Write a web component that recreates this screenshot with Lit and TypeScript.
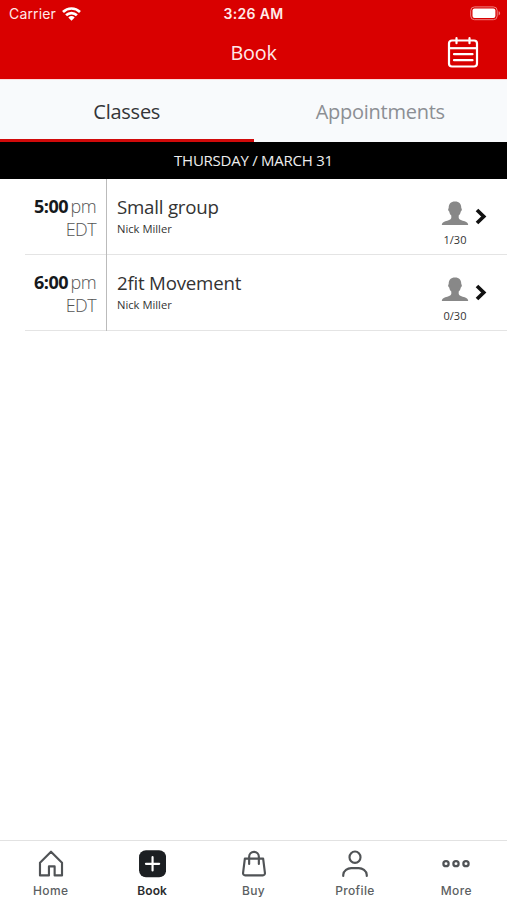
import { LitElement, html, css, svg } from "lit";
import { customElement, property } from "lit/decorators.js";

@customElement("class-row")
class ClassRow extends LitElement {
  @property() time = "";
  @property() name = "";
  @property() count = "";
  static styles = css`
    :host { display: flex; height: 76px; margin-left: 25px; box-sizing: border-box; border-bottom: 1px solid #e4e4e4; font-family: "Open Sans", "Noto Sans", sans-serif; color: #333; }
    .when { width: 71px; padding: 16px 10px 0 0; text-align: right; font-weight: 300; font-size: 18px; line-height: 23px; color: #555; border-right: 1px solid #bbb; white-space: nowrap; height: 60px; letter-spacing: -0.6px; }
    .when b { font-weight: 700; color: #16191c; letter-spacing: -0.5px; margin-right: 2.5px; }
    .info { flex: 1; padding: 15px 0 0 10px; }
    .name { font-size: 18.7px; line-height: 26px; letter-spacing: -0.22px; }
    .coach { font-size: 11.2px; line-height: 16px; margin-top: 0.5px; }
    .spots { width: 30px; margin-top: 22px; text-align: center; font-size: 11px; line-height: 14px; }
    .spots svg { display: block; margin: 0 auto 7px; }
    .arrow { margin: 29px 20px 0 5px; width: 12px; height: 17px; }
  `;
  render() {
    return html`
      <div class="when"><b>${this.time}</b>pm<br />EDT</div>
      <div class="info"><div class="name">${this.name}</div><div class="coach">Nick Miller</div></div>
      <div class="spots">
        <svg width="28" height="25" viewBox="0 0 28 25"><path fill="#888" d="M14 .5c4.300 0 6.400 2.500 6.300 6.700.9.300.7 2.300-.5 3.300-.4 2-1 3.100-2.100 4.100v2.300c.5 2 3.300 2.400 6 3.300 2.300.8 3.400 1.700 3.500 3.700H.8c.1-2 1.200-2.900 3.500-3.700 2.700-.9 5.500-1.300 6-3.300v-2.300c-1.100-1-1.700-2.100-2.100-4.100-1.200-1-1.400-3-.5-3.300C7.600 3 9.700.5 14 .5z"/></svg>
        ${this.count}
      </div>
      <svg class="arrow" viewBox="0 0 12 17"><path d="M2 2l6.700 6.500L2 15" fill="none" stroke="#111" stroke-width="3.700"/></svg>
    `;
  }
}

const icons = {
  home: svg`<path d="M3.200 27.200V13.600L15 1.800l11.800 11.800v13.600h-7.900v-9.600h-6.100v9.600z"/>`,
  book: svg`<rect x="1.100" y=".3" width="29" height="29" rx="7.500" fill="#1c1f22" stroke="none"/><path d="M15.600 7.700v14.200M8.500 14.800h14.200" stroke="#fff"/>`,
  buy: svg`<path d="M5.200 9.300h19.600l1.900 15.200c.2 1.500-.8 2.700-2.200 2.700h-19c-1.400 0-2.400-1.200-2.200-2.700zM9.800 15V7.200a5.200 5.200 0 0 1 10.400 0V15"/>`,
  profile: svg`<ellipse cx="15" cy="7.700" rx="5.900" ry="6.100"/><path d="M2.400 27.800v-1.200C2.800 22 7 19.400 11 19.400h8c4 0 8.200 2.600 8.600 7.200v1.200"/>`,
  more: svg`<g stroke-width="2.400"><circle cx="4.300" cy="14.600" r="2.800"/><circle cx="15" cy="14.600" r="2.800"/><circle cx="25.700" cy="14.600" r="2.800"/></g>`,
};
const tabs: [string, unknown][] = [["Home", icons.home], ["Book", icons.book], ["Buy", icons.buy], ["Profile", icons.profile], ["More", icons.more]];

@customElement("app-root")
class AppRoot extends LitElement {
  static styles = css`
    :host { display: flex; flex-direction: column; width: 507px; height: 900px; background: #fff; overflow: hidden; font-family: "Open Sans", "Noto Sans", sans-serif; }
    header { height: 79px; background: #d90000; color: #ffe9e9; flex: none; border-bottom: 1px solid #fbdcdc; box-sizing: content-box; }
    .status { display: grid; grid-template-columns: 1fr auto 1fr; height: 27px; align-items: center; font-family: Inter, "Liberation Sans", sans-serif; font-size: 14px; line-height: 27px; }
    .carrier { display: flex; align-items: center; gap: 6px; padding-left: 9px; letter-spacing: 0.15px; }
    .clock { font-weight: 600; font-size: 14px; letter-spacing: 0.35px; }
    .battery { justify-self: end; margin-right: 6px; }
    .status svg { display: block; }
    .bar { display: grid; grid-template-columns: 1fr auto 1fr; height: 52px; align-items: center; }
    .title { grid-column: 2; font-size: 19.8px; line-height: 26px; letter-spacing: -0.2px; margin-top: -1px; }
    .cal { justify-self: end; margin-right: 28px; display: block; }
    .tabs { display: flex; height: 62px; background: #f8fafc; flex: none; }
    .tab { flex: 1; text-align: center; line-height: 63px; font-size: 20px; letter-spacing: -0.26px; height: 59px; border-bottom: 3px solid transparent; color: #8c8f94; }
    .tab.on { color: #333538; border-color: #d10a0a; }
    .date { height: 37px; background: #000; color: #eee; text-align: center; font-size: 15px; line-height: 37px; letter-spacing: -0.25px; flex: none; padding-bottom: 1px; margin-bottom: 0; box-sizing: border-box; line-height: 36px; }
    .list { flex: 1; }
    nav { display: flex; height: 60px; border-top: 1px solid #e2e2e2; box-sizing: border-box; flex: none; }
    .item { flex: 1; text-align: center; color: #5c5f62; font: 500 12px/14px Inter, "Noto Sans", sans-serif; letter-spacing: 0.35px; }
    .item.on { color: #2b2d2f; font-weight: 600; letter-spacing: 0.1px; }
    .item svg { display: block; margin: 9px auto 6px; width: 28px; height: 28px; fill: none; stroke: #505356; stroke-width: 2.300; stroke-linejoin: round; stroke-linecap: round; }
  `;
  render() {
    return html`
      <header>
        <div class="status">
          <div class="carrier">Carrier
            <svg width="19" height="14" viewBox="0 0 19 14"><g fill="none" stroke="#fff" stroke-width="2.700"><path d="M1 4.900a12.300 12.300 0 0 1 17 0"/><path d="M4.100 8.200a7.800 7.800 0 0 1 10.800 0"/></g><path fill="#fff" d="M6.300 10.400a4.700 4.700 0 0 1 6.400 0L9.500 13.700z"/></svg>
          </div>
          <div class="clock">3:26 AM</div>
          <svg class="battery" width="31" height="15" viewBox="0 0 31 15"><rect x=".7" y=".9" width="26.500" height="12.800" rx="3.800" fill="none" stroke="#ef8080" stroke-width="1"/><rect x="2.500" y="2.600" width="22.900" height="9.400" rx="2" fill="#fff"/><path d="M28.600 5.200c2 .6 2 3.600 0 4.200z" fill="#ef8080"/></svg>
        </div>
        <div class="bar">
          <div class="title">Book</div>
          <svg class="cal" width="32" height="32" viewBox="0 0 32 32" fill="none" stroke="#fff" stroke-width="2.200"><rect x="2" y="3.500" width="28" height="26" rx="3"/><path d="M2 11.200h28"/><path d="M9.500 1.200v5M22.500 1.200v5M7 17.200h18.500M7 23.200h18.500" stroke-linecap="round"/></svg>
        </div>
      </header>
      <div class="tabs"><div class="tab on">Classes</div><div class="tab">Appointments</div></div>
      <div class="date">THURSDAY / MARCH 31</div>
      <div class="list">
        <class-row time="5:00" name="Small group" count="1/30"></class-row>
        <class-row time="6:00" name="2fit Movement" count="0/30"></class-row>
      </div>
      <nav>${tabs.map(([label, icon]) => html`<div class="item ${label === "Book" ? "on" : ""}"><svg viewBox="0 0 30 30">${icon}</svg>${label}</div>`)}</nav>
    `;
  }
}
